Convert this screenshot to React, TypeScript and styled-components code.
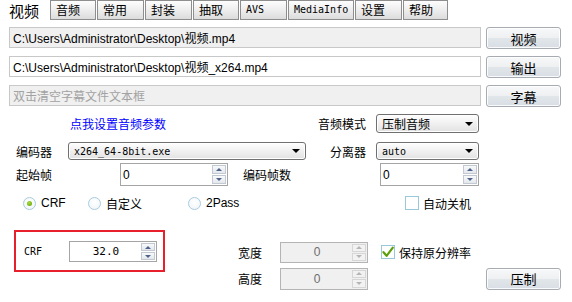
import React from 'react';
import styled, { createGlobalStyle, css } from 'styled-components';

const SANS = `"Liberation Sans", "Noto Sans CJK SC", sans-serif`;
const CJK = `"Noto Sans CJK SC", sans-serif`;
const MONO = `"DejaVu Sans Mono", "Noto Sans CJK SC", monospace`;

const Global = createGlobalStyle`
  html, body { margin: 0; padding: 0; background: #fff; }
  body { width: 572px; height: 302px; overflow: hidden; font-family: ${CJK}; font-size: 12px; color: #000; }
`;

const Page = styled.div`
  width: 572px;
  height: 302px;
  background: #fff;
  display: flex;
  flex-direction: column;
`;

const TabBar = styled.div`
  display: flex;
  gap: 1px;
  height: 20px;
`;

const Tab = styled.div<{ $w: number; $active?: boolean; $mono?: boolean }>`
  box-sizing: border-box;
  width: ${p => p.$w}px;
  height: 20px;
  padding-left: 5px;
  display: flex;
  align-items: center;
  font-family: ${CJK};
  font-size: 12px;
  line-height: 1;
  border: 1px solid #8e8e8e;
  background: linear-gradient(#fdfdfd, #ececec 55%, #dcdcdc);
  ${p => p.$mono && css`font-family: ${MONO}; font-size: 10px;`}
  ${p => p.$active && css`
    border-color: transparent;
    background: #fff;
    font-size: 15px;
    padding-left: 8px;
  `}
`;

const PathSection = styled.div`
  display: flex;
  flex-direction: column;
  gap: 7px;
  padding: 7px 11px 0 9px;
`;

const PathRow = styled.div`
  display: flex;
  gap: 5px;
  align-items: flex-start;
`;

const PathField = styled.div<{ $white?: boolean; $placeholder?: boolean }>`
  box-sizing: border-box;
  width: 472px;
  height: 21px;
  border: 1px solid #c8c8c8;
  background: ${p => (p.$white ? '#fff' : '#f0f0f0')};
  padding-left: 3px;
  display: flex;
  align-items: center;
  font-family: ${SANS};
  font-size: 12px;
  color: ${p => (p.$placeholder ? '#a2a2a2' : '#000')};
  white-space: nowrap;
  overflow: hidden;
`;

const Button = styled.div`
  box-sizing: border-box;
  width: 75px;
  height: 22px;
  border: 1px solid #a7acb2;
  border-radius: 3px;
  background: linear-gradient(#f7f8f9, #eef0f2 48%, #e1e6ea 52%, #d8dee4);
  box-shadow: inset 0 0 0 1px rgba(255, 255, 255, 0.85);
  display: flex;
  align-items: center;
  justify-content: center;
  font-family: ${CJK};
  font-size: 13px;
  color: #000;
`;

const Row = styled.div<{ $top: number; $h: number; $left?: number }>`
  display: flex;
  align-items: center;
  margin-top: ${p => p.$top}px;
  height: ${p => p.$h}px;
  padding-left: ${p => p.$left ?? 0}px;
`;

const Label = styled.div<{ $w: number; $right?: boolean; $mono?: boolean }>`
  width: ${p => p.$w}px;
  flex: none;
  text-align: ${p => (p.$right ? 'right' : 'left')};
  font-family: ${p => (p.$mono ? MONO : CJK)};
  font-size: ${p => (p.$mono ? 10 : 12)}px;
  white-space: nowrap;
`;

const Link = styled.div<{ $w: number }>`
  width: ${p => p.$w}px;
  flex: none;
  color: #0000ff;
  font-size: 12px;
  cursor: pointer;
`;

const Combo = styled.div<{ $w: number; $h: number; $mono?: boolean }>`
  box-sizing: border-box;
  position: relative;
  flex: none;
  width: ${p => p.$w}px;
  height: ${p => p.$h}px;
  border: 1px solid #707070;
  border-radius: 3px;
  background: linear-gradient(#fefefe, #f0f0f0 50%, #e2e2e2);
  box-shadow: inset 0 0 0 1px #fff;
  display: flex;
  align-items: center;
  padding-left: 5px;
  font-family: ${p => (p.$mono ? MONO : CJK)};
  font-size: ${p => (p.$mono ? 10 : 12)}px;
`;

const ComboArrow = styled.span`
  position: absolute;
  right: 5px;
  top: 50%;
  margin-top: -2px;
  width: 0;
  height: 0;
  border-left: 4px solid transparent;
  border-right: 4px solid transparent;
  border-top: 4px solid #000;
`;

const Spin = styled.div<{ $w: number; $h: number; $disabled?: boolean }>`
  box-sizing: border-box;
  flex: none;
  width: ${p => p.$w}px;
  height: ${p => p.$h}px;
  border: 1px solid ${p => (p.$disabled ? '#b4b4b4' : '#a5a5a5')};
  background: ${p => (p.$disabled ? '#f0f0f0' : '#fff')};
  display: flex;
  align-items: stretch;
  padding: 1px;
`;

const SpinValue = styled.div<{ $center?: boolean; $mono?: boolean; $disabled?: boolean }>`
  flex: 1;
  display: flex;
  align-items: center;
  justify-content: ${p => (p.$center ? 'center' : 'flex-start')};
  padding-left: ${p => (p.$center ? 0 : 1)}px;
  font-family: ${p => (p.$mono ? MONO : SANS)};
  font-size: ${p => (p.$mono ? 11 : 12)}px;
  color: ${p => (p.$disabled ? '#6d6d6d' : '#000')};
`;

const SpinButtons = styled.div`
  width: 14px;
  display: flex;
  flex-direction: column;
  gap: 1px;
`;

const SpinHalf = styled.div<{ $down?: boolean; $disabled?: boolean }>`
  flex: 1;
  box-sizing: border-box;
  border: 1px solid ${p => (p.$disabled ? '#d6d6d6' : '#c3c9d1')};
  background: ${p => (p.$disabled ? '#f2f2f2' : 'linear-gradient(#f8f9fa, #e4e8ee)')};
  display: flex;
  align-items: center;
  justify-content: center;
  &::after {
    content: '';
    width: 0;
    height: 0;
    border-left: 3px solid transparent;
    border-right: 3px solid transparent;
    ${p =>
      p.$down
        ? css`border-top: 3px solid ${p.$disabled ? '#b5b5b5' : '#4f6389'};`
        : css`border-bottom: 3px solid ${p.$disabled ? '#b5b5b5' : '#4f6389'};`}
  }
`;

const RadioItem = styled.div<{ $w: number }>`
  width: ${p => p.$w}px;
  flex: none;
  display: flex;
  align-items: center;
  gap: 5px;
  font-family: ${SANS};
  font-size: 12px;
`;

const RadioDot = styled.span<{ $on?: boolean }>`
  box-sizing: border-box;
  width: 13px;
  height: 13px;
  border-radius: 50%;
  border: 1px solid #a9cbdd;
  background: radial-gradient(circle at 50% 40%, #ffffff, #eef4f8);
  display: flex;
  align-items: center;
  justify-content: center;
  ${p =>
    p.$on &&
    css`
      &::after {
        content: '';
        width: 5px;
        height: 5px;
        border-radius: 50%;
        background: radial-gradient(circle at 40% 35%, #a8dc3c, #5e9e00);
      }
    `}
`;

const CheckItem = styled.div`
  display: flex;
  align-items: center;
  gap: 4px;
  font-family: ${CJK};
  font-size: 12px;
  white-space: nowrap;
`;

const CheckBox = styled.span`
  box-sizing: border-box;
  width: 14px;
  height: 14px;
  border: 1px solid #99c8da;
  background: #fff;
  display: flex;
  align-items: center;
  justify-content: center;
`;

const BottomRow = styled.div`
  display: flex;
  align-items: flex-start;
  margin-top: 20px;
  padding-left: 14px;
  gap: 73px;
`;

const CrfBox = styled.div`
  box-sizing: border-box;
  width: 151px;
  height: 42px;
  border: 2px solid #e8202c;
  display: flex;
  align-items: center;
  padding-left: 8px;
  padding-top: 1px;
`;

const SizeGrid = styled.div`
  display: grid;
  grid-template-columns: 42px 88px 13px 105px 75px;
  grid-template-rows: 20px 21px;
  row-gap: 6px;
  margin-top: 12px;
  align-items: center;
`;

const GridSpacer = styled.div``;

const SizeLabel = styled.div`
  font-family: ${CJK};
  font-size: 12px;
`;

function SpinBox(props: { w: number; h: number; value: string; center?: boolean; mono?: boolean; disabled?: boolean }) {
  const { w, h, value, center, mono, disabled } = props;
  return (
    <Spin $w={w} $h={h} $disabled={disabled}>
      <SpinValue $center={center} $mono={mono} $disabled={disabled}>{value}</SpinValue>
      <SpinButtons>
        <SpinHalf $disabled={disabled} />
        <SpinHalf $down $disabled={disabled} />
      </SpinButtons>
    </Spin>
  );
}

const Check = () => (
  <svg width="12" height="12" viewBox="0 0 12 12">
    <path d="M1.5 6.2 L4.6 9.8 L10.8 1.6" fill="none" stroke="#5c9e0a" strokeWidth="2.2" strokeLinecap="round" strokeLinejoin="round" />
  </svg>
);

export default function App() {
  const tabs: { label: string; w: number; mono?: boolean }[] = [
    { label: '音频', w: 46 },
    { label: '常用', w: 47 },
    { label: '封装', w: 47 },
    { label: '抽取', w: 46 },
    { label: 'AVS', w: 47, mono: true },
    { label: 'MediaInfo', w: 66, mono: true },
    { label: '设置', w: 47 },
    { label: '帮助', w: 45 },
  ];
  return (
    <Page>
      <Global />
      <TabBar>
        <Tab $w={49} $active>视频</Tab>
        {tabs.map(t => (
          <Tab key={t.label} $w={t.w} $mono={t.mono}>{t.label}</Tab>
        ))}
      </TabBar>

      <PathSection>
        <PathRow>
          <PathField>C:\Users\Administrator\Desktop\视频.mp4</PathField>
          <Button>视频</Button>
        </PathRow>
        <PathRow>
          <PathField $white>C:\Users\Administrator\Desktop\视频_x264.mp4</PathField>
          <Button>输出</Button>
        </PathRow>
        <PathRow>
          <PathField $placeholder>双击清空字幕文件文本框</PathField>
          <Button>字幕</Button>
        </PathRow>
      </PathSection>

      <Row $top={7} $h={19} $left={70}>
        <Link $w={246}>点我设置音频参数</Link>
        <Label $w={50} $right>音频模式</Label>
        <Label $w={10} />
        <Combo $w={103} $h={19}>压制音频<ComboArrow /></Combo>
      </Row>

      <Row $top={9} $h={18} $left={16}>
        <Label $w={52}>编码器</Label>
        <Combo $w={238} $h={18} $mono>x264_64-8bit.exe<ComboArrow /></Combo>
        <Label $w={60} $right>分离器</Label>
        <Label $w={10} />
        <Combo $w={103} $h={18} $mono>auto<ComboArrow /></Combo>
      </Row>

      <Row $top={3} $h={23} $left={16}>
        <Label $w={104}>起始帧</Label>
        <SpinBox w={108} h={23} value="0" />
        <Label $w={15} />
        <Label $w={137}>编码帧数</Label>
        <SpinBox w={99} h={23} value="0" />
      </Row>

      <Row $top={10} $h={14} $left={23}>
        <RadioItem $w={65}><RadioDot $on />CRF</RadioItem>
        <RadioItem $w={100}><RadioDot /><span style={{ fontFamily: CJK }}>自定义</span></RadioItem>
        <RadioItem $w={217}><RadioDot />2Pass</RadioItem>
        <CheckItem><CheckBox />自动关机</CheckItem>
      </Row>

      <BottomRow>
        <CrfBox>
          <Label $w={45} $mono>CRF</Label>
          <SpinBox w={88} h={21} value="32.0" center mono />
        </CrfBox>
        <SizeGrid>
          <SizeLabel>宽度</SizeLabel>
          <SpinBox w={88} h={21} value="0" center disabled />
          <GridSpacer />
          <CheckItem><CheckBox><Check /></CheckBox>保持原分辨率</CheckItem>
          <GridSpacer />
          <SizeLabel>高度</SizeLabel>
          <SpinBox w={88} h={22} value="0" center disabled />
          <GridSpacer />
          <GridSpacer />
          <Button>压制</Button>
        </SizeGrid>
      </BottomRow>
    </Page>
  );
}
